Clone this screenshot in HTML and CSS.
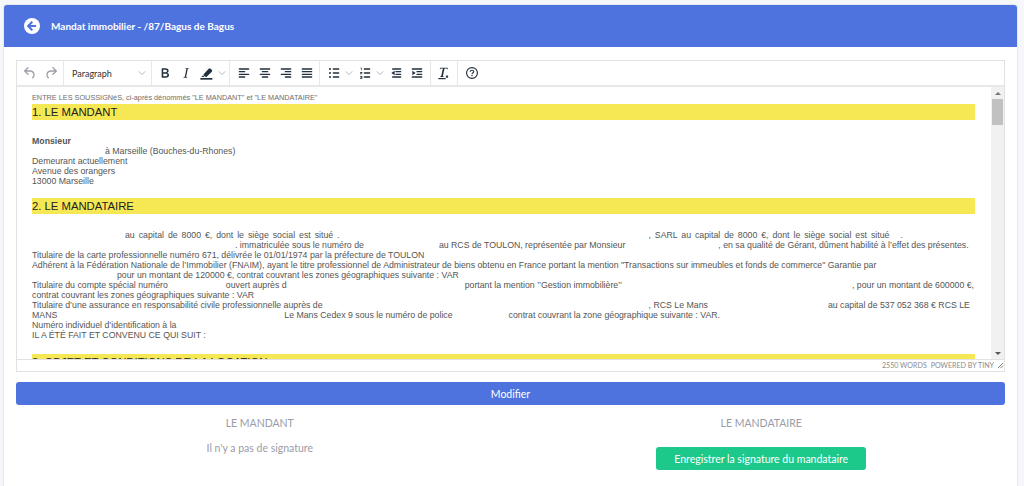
FILE: index.html
```html
<!DOCTYPE html>
<html lang="fr">
<head>
    <meta charset="UTF-8">
    <meta name="viewport" content="width=device-width, initial-scale=1.0">
    <title>Mandat immobilier</title>
    <link rel="stylesheet" href="styles.css">
</head>
<body>
    <svg class="sprite" aria-hidden="true">
        <symbol id="i-undo" viewBox="0 0 24 24"><path d="M6.4 8H12c3.7 0 6.2 2 6.8 5.1.6 2.7-.4 5.6-2.3 6.8a1 1 0 0 1-1-1.8c1.1-.6 1.8-2.7 1.4-4.6-.5-2.1-2.1-3.5-4.9-3.5H6.4l3.3 3.3a1 1 0 1 1-1.4 1.4l-5-5a1 1 0 0 1 0-1.4l5-5a1 1 0 0 1 1.4 1.4L6.4 8z"/></symbol>
        <symbol id="i-redo" viewBox="0 0 24 24"><path d="M17.6 10H12c-2.8 0-4.4 1.4-4.9 3.5-.4 2 .3 4 1.4 4.6a1 1 0 1 1-1 1.8c-2-1.2-2.9-4.1-2.3-6.8.6-3 3-5.1 6.8-5.1h5.6l-3.3-3.3a1 1 0 1 1 1.4-1.4l5 5a1 1 0 0 1 0 1.4l-5 5a1 1 0 0 1-1.4-1.4l3.3-3.3z"/></symbol>
        <symbol id="i-bold" viewBox="0 0 24 24"><path d="M7.8 19c-.3 0-.5 0-.6-.2l-.2-.5V5.7c0-.2 0-.4.2-.5l.6-.2h5c1.5 0 2.7.3 3.5 1 .7.6 1.1 1.4 1.1 2.5a3 3 0 0 1-.6 1.9c-.4.6-1 1-1.6 1.2.4.1.9.3 1.3.6s.8.7 1 1.2c.4.4.5 1 .5 1.6 0 1.3-.4 2.3-1.3 3-.8.7-2.1 1-3.8 1H7.8zm5-8.3c.6 0 1.2-.1 1.6-.5.4-.3.6-.7.6-1.3 0-1.1-.8-1.7-2.3-1.7H9.3v3.5h3.4zm.5 6c.7 0 1.3-.1 1.7-.4.4-.4.6-.9.6-1.5s-.2-1-.7-1.4c-.4-.3-1-.4-2-.4H9.4v3.8h4z"/></symbol>
        <symbol id="i-italic" viewBox="0 0 24 24"><path d="M16.7 4.7l-.1.9h-.3c-.6 0-1 0-1.4.3-.3.3-.4.6-.5 1.1l-2.1 9.8v.6c0 .5.4.8 1.4.8h.2l-.2.8H8l.2-.8h.2c1.1 0 1.8-.5 2-1.5l2-9.8.1-.5c0-.6-.4-.8-1.4-.8h-.3l.2-.9h5.8z"/></symbol>
        <symbol id="i-mark" viewBox="0 0 24 24"><path d="M6 15.5l2.5 2.5H3.6zM7 14l7.5-8.2c.8-.8 2-.9 2.9-.1l1.6 1.4c.9.8 1 2 .2 2.9L11.500 17.500c-.6.6-1.300.5-1.800 0L7.100 15.200c-.4-.4-.5-.8-.1-1.200z"/><rect x="2" y="19.500" width="18" height="2.500"/></symbol>
        <symbol id="i-left" viewBox="0 0 24 24"><path d="M5 5h14a1 1 0 0 1 0 2H5a1 1 0 0 1 0-2zm0 4h8a1 1 0 0 1 0 2H5a1 1 0 0 1 0-2zm0 4h14a1 1 0 0 1 0 2H5a1 1 0 0 1 0-2zm0 4h8a1 1 0 0 1 0 2H5a1 1 0 0 1 0-2z"/></symbol>
        <symbol id="i-center" viewBox="0 0 24 24"><path d="M5 5h14a1 1 0 0 1 0 2H5a1 1 0 0 1 0-2zm3 4h8a1 1 0 0 1 0 2H8a1 1 0 0 1 0-2zm-3 4h14a1 1 0 0 1 0 2H5a1 1 0 0 1 0-2zm3 4h8a1 1 0 0 1 0 2H8a1 1 0 0 1 0-2z"/></symbol>
        <symbol id="i-right" viewBox="0 0 24 24"><path d="M5 5h14a1 1 0 0 1 0 2H5a1 1 0 0 1 0-2zm6 4h8a1 1 0 0 1 0 2h-8a1 1 0 0 1 0-2zm-6 4h14a1 1 0 0 1 0 2H5a1 1 0 0 1 0-2zm6 4h8a1 1 0 0 1 0 2h-8a1 1 0 0 1 0-2z"/></symbol>
        <symbol id="i-justify" viewBox="0 0 24 24"><path d="M5 5h14a1 1 0 0 1 0 2H5a1 1 0 0 1 0-2zm0 4h14a1 1 0 0 1 0 2H5a1 1 0 0 1 0-2zm0 4h14a1 1 0 0 1 0 2H5a1 1 0 0 1 0-2zm0 4h14a1 1 0 0 1 0 2H5a1 1 0 0 1 0-2z"/></symbol>
        <symbol id="i-bullets" viewBox="0 0 24 24"><path d="M11 5h8a1 1 0 0 1 0 2h-8a1 1 0 0 1 0-2zm0 6h8a1 1 0 0 1 0 2h-8a1 1 0 0 1 0-2zm0 6h8a1 1 0 0 1 0 2h-8a1 1 0 0 1 0-2z"/><circle cx="6" cy="6" r="1.500"/><circle cx="6" cy="12" r="1.500"/><circle cx="6" cy="18" r="1.500"/></symbol>
        <symbol id="i-numbers" viewBox="0 0 24 24"><path d="M11 5h8a1 1 0 0 1 0 2h-8a1 1 0 0 1 0-2zm0 6h8a1 1 0 0 1 0 2h-8a1 1 0 0 1 0-2zm0 6h8a1 1 0 0 1 0 2h-8a1 1 0 0 1 0-2z"/><path d="M5 4h2v4H6V5H5zM4.500 10.500H8v1L6 13h2v1H4.500v-1l2-1.500h-2zM4.500 16.500H8v4H4.500v-1H7v-.5H5.500v-1H7v-.5H4.500z"/></symbol>
        <symbol id="i-outdent" viewBox="0 0 24 24"><path d="M7 5h12a1 1 0 0 1 0 2H7a1 1 0 0 1 0-2zm5 4h7a1 1 0 0 1 0 2h-7a1 1 0 0 1 0-2zm0 4h7a1 1 0 0 1 0 2h-7a1 1 0 0 1 0-2zm-5 4h12a1 1 0 0 1 0 2H7a1 1 0 0 1 0-2zM10 8.500v7L5 12z"/></symbol>
        <symbol id="i-indent" viewBox="0 0 24 24"><path d="M5 5h14a1 1 0 0 1 0 2H5a1 1 0 0 1 0-2zm7 4h7a1 1 0 0 1 0 2h-7a1 1 0 0 1 0-2zm0 4h7a1 1 0 0 1 0 2h-7a1 1 0 0 1 0-2zm-7 4h14a1 1 0 0 1 0 2H5a1 1 0 0 1 0-2zM5 8.500v7l5-3.500z"/></symbol>
        <symbol id="i-clear" viewBox="0 0 24 24"><path d="M8 4h11v2.500h-.8c-.2-.7-.5-1.200-1.400-1.200h-2.500l-2.400 11c-.1.700.1.900.8.900h.7v.8H7.500v-.8h.7c.8 0 1-.3 1.200-.9l2.400-11H9.300c-.9 0-1.200.5-1.500 1.200H7z"/><rect x="5" y="19.500" width="11" height="1.800"/><path d="M17 15.500l1 1 1-1 1 1-1 1 1 1-1 1-1-1-1 1-1-1 1-1-1-1z"/></symbol>
        <symbol id="i-help" viewBox="0 0 24 24"><path d="M12 3a9 9 0 1 1 0 18 9 9 0 0 1 0-18zm0 1.700a7.300 7.300 0 1 0 0 14.600 7.300 7.300 0 0 0 0-14.600z"/><path d="M12 7c2 0 3.500 1.200 3.500 2.900 0 1.300-.7 2-1.600 2.600-.7.500-1 .8-1 1.500h-1.700c0-1.300.6-2 1.500-2.600.7-.5 1.100-.8 1.100-1.500 0-.7-.8-1.300-1.800-1.300s-1.700.6-1.800 1.500H8.500C8.600 8.300 10 7 12 7zm-.9 8h1.800v1.700h-1.800z"/></symbol>
        <symbol id="i-chevron" viewBox="0 0 10 10"><path d="M1 3l4 4 4-4" fill="none" stroke="currentColor" stroke-width="1"/></symbol>
    </svg>

    <main class="card">
        <header class="card-head">
            <svg class="back" viewBox="0 0 16 16" aria-hidden="true">
                <circle cx="8" cy="8" r="8" fill="#fff"/>
                <path d="M8.300 3.800L4.100 8l4.200 4.200M4.400 8h7.700" fill="none" stroke="#4e73df" stroke-width="2"/>
            </svg>
            <h1>Mandat immobilier - /87/Bagus de Bagus</h1>
        </header>

        <div class="card-body">
            <section class="editor">
                <div class="toolbar">
                    <div class="tb-group">
                        <span class="tb-btn off"><svg><use href="#i-undo"/></svg></span>
                        <span class="tb-btn off"><svg><use href="#i-redo"/></svg></span>
                    </div>
                    <div class="tb-group tb-format">
                        <span class="tb-select">Paragraph</span>
                        <svg class="chev"><use href="#i-chevron"/></svg>
                    </div>
                    <div class="tb-group">
                        <span class="tb-btn"><svg><use href="#i-bold"/></svg></span>
                        <span class="tb-btn"><svg><use href="#i-italic"/></svg></span>
                        <span class="tb-btn"><svg><use href="#i-mark"/></svg></span>
                        <svg class="chev"><use href="#i-chevron"/></svg>
                    </div>
                    <div class="tb-group tb-align">
                        <span class="tb-btn"><svg><use href="#i-left"/></svg></span>
                        <span class="tb-btn"><svg><use href="#i-center"/></svg></span>
                        <span class="tb-btn"><svg><use href="#i-right"/></svg></span>
                        <span class="tb-btn"><svg><use href="#i-justify"/></svg></span>
                    </div>
                    <div class="tb-group tb-roomy">
                        <span class="tb-btn"><svg><use href="#i-bullets"/></svg></span>
                        <svg class="chev"><use href="#i-chevron"/></svg>
                        <span class="tb-btn"><svg><use href="#i-numbers"/></svg></span>
                        <svg class="chev"><use href="#i-chevron"/></svg>
                        <span class="tb-btn"><svg><use href="#i-outdent"/></svg></span>
                        <span class="tb-btn"><svg><use href="#i-indent"/></svg></span>
                    </div>
                    <div class="tb-group tb-clear">
                        <span class="tb-btn"><svg><use href="#i-clear"/></svg></span>
                    </div>
                    <div class="tb-group tb-roomy tb-last">
                        <span class="tb-btn"><svg><use href="#i-help"/></svg></span>
                    </div>
                </div>

                <div class="edit-area">
                    <div class="doc">
                        <p class="intro">ENTRE LES SOUSSIGNéS, ci-après dénommés "LE MANDANT" et "LE MANDATAIRE"</p>
                        <h2 class="band">1. LE MANDANT</h2>
                        <p class="party"><strong>Monsieur</strong></p>
                        <p><i class="gap g73"></i>à Marseille (Bouches-du-Rhones)</p>
                        <p>Demeurant actuellement</p>
                        <p>Avenue des orangers</p>
                        <p>13000 Marseille</p>
                        <h2 class="band band-2">2. LE MANDATAIRE</h2>
                        <p class="first"><i class="gap g93"></i><span class="wide">au capital de 8000 €, dont le siège social est situé .</span><i class="gap g309"></i><span class="wide">, SARL au capital de 8000 €, dont le siège social est situé</span><i class="gap g11"></i>.</p>
                        <p><i class="gap g203"></i>. immatriculée sous le numéro de<i class="gap g75"></i>au RCS de TOULON, représentée par Monsieur<i class="gap g93"></i>, en sa qualité de Gérant, dûment habilité à l’effet des présentes.</p>
                        <p>Titulaire de la carte professionnelle numéro 671, délivrée le 01/01/1974 par la préfecture de TOULON</p>
                        <p>Adhérent à la Fédération Nationale de l’Immobilier (FNAIM), ayant le titre professionnel de Administrateur de biens obtenu en France portant la mention "Transactions sur immeubles et fonds de commerce" Garantie par</p>
                        <p><i class="gap g85"></i>pour un montant de 120000 €, contrat couvrant les zones géographiques suivante : VAR</p>
                        <p>Titulaire du compte spécial numéro<i class="gap g58"></i>ouvert auprès d<i class="gap g178"></i>portant la mention ’’Gestion immobilière’’<i class="gap g230"></i>, pour un montant de 600000 €,</p>
                        <p>contrat couvrant les zones géographiques suivante : VAR</p>
                        <p>Titulaire d’une assurance en responsabilité civile professionnelle auprès de<i class="gap g326"></i>, RCS Le Mans<i class="gap g120"></i>au capital de 537 052 368 € RCS LE</p>
                        <p>MANS<i class="gap g227"></i>Le Mans Cedex 9 sous le numéro de police<i class="gap g56"></i>contrat couvrant la zone géographique suivante : VAR.</p>
                        <p>Numéro individuel d’identification à la</p>
                        <p>IL A ÉTÉ FAIT ET CONVENU CE QUI SUIT :</p>
                        <h2 class="band band-3">3. OBJET ET CONDITIONS DE LA LOCATION</h2>
                    </div>
                    <div class="scrollbar">
                        <span class="arrow up"></span>
                        <span class="thumb"></span>
                        <span class="arrow down"></span>
                    </div>
                </div>

                <footer class="statusbar">
                    <span>2550 WORDS</span>
                    <span>POWERED BY TINY</span>
                    <svg class="grip" viewBox="0 0 8 8" aria-hidden="true"><path d="M7 1L1 7M7 4L4 7" fill="none" stroke="#666" stroke-width="1"/></svg>
                </footer>
            </section>

            <button class="btn btn-primary" type="button">Modifier</button>

            <div class="signatures">
                <div class="sign-col">
                    <h3>LE MANDANT</h3>
                    <p>Il n'y a pas de signature</p>
                </div>
                <div class="sign-col">
                    <h3>LE MANDATAIRE</h3>
                    <button class="btn btn-success" type="button">Enregistrer la signature du mandataire</button>
                </div>
            </div>
        </div>
    </main>
</body>
</html>
```

FILE: styles.css
```css
* {
box-sizing: border-box;
}

html,
body {
height: 100%;
margin: 0;
overflow: hidden;
}

body {
background: #f6f7fb;
font-family: Lato, sans-serif;
padding: 5px 7px 0 4px;
}

.sprite {
display: none;
}

.card {
background: #fff;
border-radius: 3px 3px 0 0;
box-shadow: 0 0 0 1px #e6e8f0;
height: 100%;
}

.card-head {
align-items: center;
background: #4e73df;
border-radius: 3px 3px 0 0;
display: flex;
height: 42px;
padding-left: 20px;
}

.back {
height: 16px;
width: 16px;
}

.card-head h1 {
color: #fff;
font-size: 10px;
font-weight: 700;
margin: 0 0 0 11px;
}

.card-body {
padding: 13px 12px 0;
}

/* editor */
.editor {
border: 1px solid #e2e2e2;
height: 312px;
display: flex;
flex-direction: column;
}

.toolbar {
border-bottom: 2px solid #e8e8e8;
display: flex;
flex: none;
height: 26px;
}

.tb-group {
align-items: center;
border-right: 1px solid #e8e8e8;
display: flex;
padding: 0 2px;
}

.tb-roomy {
padding: 0 3px;
}

.tb-align {
padding: 0 2px 0 3px;
}

.tb-clear {
padding: 0 4px 0 1px;
}

.tb-last {
border-right: 0;
}

.tb-format {
justify-content: space-between;
padding: 0 4px 0 8px;
width: 88px;
}

.tb-select {
color: #333;
font-size: 9px;
}

.tb-btn {
align-items: center;
color: #222f3e;
display: flex;
justify-content: center;
width: 21px;
}

.tb-btn svg {
fill: currentColor;
height: 16px;
width: 16px;
}

.tb-btn.off {
color: #9aa0a8;
}

.chev {
color: #a0a5ad;
flex: none;
height: 10px;
padding: 1px;
width: 10px;
}

.edit-area {
display: flex;
flex: 1;
min-height: 0;
}

.doc {
color: #555;
flex: 1;
font-family: "Liberation Sans", Arial, sans-serif;
font-size: 8.75px;
line-height: 10px;
min-width: 0;
overflow: hidden;
padding: 6px 16px 0 15px;
white-space: nowrap;
}

.doc p {
margin: 0;
}

.doc .intro {
color: #6e6e6e;
font-size: 7.3px;
}

.band {
background: #f5e854;
color: #222;
font-size: 11.3px;
font-weight: 400;
height: 16px;
line-height: 16px;
margin: 1px 0 0;
}

.band-2 {
margin-top: 12px;
}

.band-3 {
margin-top: 14px;
}

.doc .party {
margin-top: 16px;
}

.doc .first {
margin-top: 16px;
}

.wide {
word-spacing: 1.5px;
}

.gap {
display: inline-block;
}

.g11 { width: 11px; }
.g56 { width: 56px; }
.g58 { width: 58px; }
.g73 { width: 73px; }
.g75 { width: 75px; }
.g85 { width: 85px; }
.g93 { width: 93px; }
.g120 { width: 120px; }
.g178 { width: 178px; }
.g203 { width: 203px; }
.g227 { width: 227px; }
.g230 { width: 230px; }
.g309 { width: 309px; }
.g326 { width: 326px; }

.scrollbar {
background: #f1f1f1;
display: flex;
flex: none;
flex-direction: column;
height: 100%;
width: 13px;
}

.thumb {
background: #c1c1c1;
height: 26px;
margin: 1px 1px 0;
}

.arrow {
border-left: 3px solid transparent;
border-right: 3px solid transparent;
height: 0;
width: 0;
}

.arrow.up {
border-bottom: 3px solid #777;
margin: 5px auto 3px;
}

.arrow.down {
border-top: 3px solid #555;
margin: auto auto 4px;
}

.statusbar {
align-items: center;
border-top: 1px solid #e2e2e2;
color: #8b8b8b;
display: flex;
flex: none;
font-size: 7.1px;
gap: 4px;
height: 12px;
justify-content: flex-end;
}

.grip {
height: 7px;
margin-left: -1px;
width: 7px;
}

/* buttons and signatures */
.btn {
border: 0;
border-radius: 3px;
color: #fff;
cursor: pointer;
font-family: inherit;
font-size: 10.5px;
}

.btn-primary {
background: #4e73df;
display: block;
height: 23px;
margin-top: 10px;
width: 100%;
}

.btn-success {
background: #1cc88a;
height: 23px;
width: 210px;
}

.signatures {
color: #9a9ca8;
display: grid;
font-size: 10.5px;
grid-template-columns: 1fr 1fr;
margin: 0 -7px;
padding-top: 11px;
text-align: center;
}

.sign-col h3 {
font-size: inherit;
font-weight: 400;
line-height: 14px;
margin: 0;
}

.sign-col p {
line-height: 14px;
margin: 11px 0 0;
}

.sign-col .btn {
margin-top: 17px;
}
```
